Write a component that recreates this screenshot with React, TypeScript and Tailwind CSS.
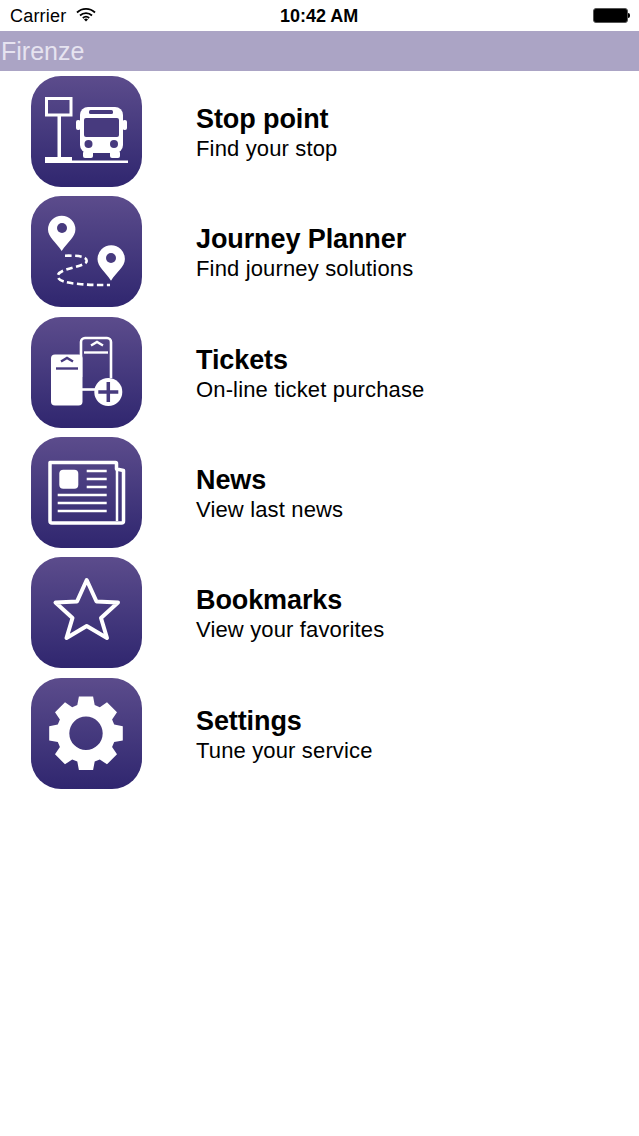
const sans = { fontFamily: '"Liberation Sans", Arial, sans-serif' }

function gearPath() {
  const cx = 55
  const cy = 55.3
  const pts: string[] = []
  for (let i = 0; i < 8; i++) {
    const a = (i * Math.PI) / 4 - Math.PI / 2
    const corners: [number, number][] = [
      [29.5, -0.3],
      [37.5, -0.19],
      [37.5, 0.19],
      [29.5, 0.3],
    ]
    corners.forEach(([r, d]) => {
      pts.push(`${(cx + r * Math.cos(a + d)).toFixed(1)} ${(cy + r * Math.sin(a + d)).toFixed(1)}`)
    })
  }
  return `M${pts.join('L')}Z M${cx - 16.7} ${cy}a16.7 16.7 0 1 0 33.4 0a16.7 16.7 0 1 0 -33.4 0Z`
}

const DARK = '#473a7e'

const icons = {
  stop: (
    <>
      <rect x="15.500" y="22.500" width="24.500" height="16.500" fill="none" stroke="#fff" strokeWidth="3" />
      <rect x="26.500" y="39" width="3.500" height="44" fill="#fff" />
      <rect x="14" y="81" width="27" height="6" fill="#fff" />
      <rect x="41" y="84.500" width="56" height="2.500" fill="#fff" />
      <rect x="49" y="31" width="43" height="46" rx="8" fill="#fff" />
      <rect x="45" y="44" width="4.500" height="10" rx="2" fill="#fff" />
      <rect x="91.500" y="44" width="4.500" height="10" rx="2" fill="#fff" />
      <rect x="52" y="75" width="10" height="7" rx="2" fill="#fff" />
      <rect x="79" y="75" width="10" height="7" rx="2" fill="#fff" />
      <rect x="58" y="34" width="24" height="4" rx="1.500" fill={DARK} />
      <rect x="53" y="42" width="35" height="19" rx="2" fill={DARK} />
      <circle cx="57.500" cy="68" r="4" fill={DARK} />
      <circle cx="83" cy="68" r="4" fill={DARK} />
    </>
  ),
  journey: (
    <>
      <path d="M30.700 55C25 46 17 41 17 33.500a13.700 13.700 0 0 1 27.400 0C44.400 41 36.500 46 30.700 55Z" fill="#fff" />
      <circle cx="31" cy="32" r="5" fill={DARK} />
      <path d="M80 84.700C74.500 76 66.500 71 66.500 63a13.700 13.700 0 0 1 27.400 0C93.900 71 85.500 76 80 84.700Z" fill="#fff" />
      <circle cx="80" cy="62" r="5" fill={DARK} />
      <path
        d="M34 59.700C46 59.500 56 60 55.700 65C55.500 71 27 72 26.700 80C26.500 85 36 87 48 88C58 89 68 89 79 89"
        fill="none"
        stroke="#fff"
        strokeWidth="2.600"
        strokeDasharray="6.500 3.500"
      />
    </>
  ),
  tickets: (
    <>
      <path d="M50 60V25a4 4 0 0 1 4-4h22a4 4 0 0 1 4 4v36" fill="none" stroke="#fff" strokeWidth="2.600" />
      <path d="M51 72.500h15" stroke="#fff" strokeWidth="2.600" />
      <rect x="20" y="37.500" width="31.500" height="51" rx="4" fill="#fff" />
      <path d="M30 44.500l6-3.500 6 3.500" fill="none" stroke={DARK} strokeWidth="2.400" />
      <path d="M25 51.500h22" stroke={DARK} strokeWidth="2.400" />
      <path d="M60 28.500l6-3.500 6 3.500" fill="none" stroke="#fff" strokeWidth="2.400" />
      <path d="M53 35.500h24" stroke="#fff" strokeWidth="2.400" />
      <circle cx="77.300" cy="75" r="14" fill="#fff" />
      <path d="M77.300 65v20M67.300 75h20" stroke={DARK} strokeWidth="3.500" />
    </>
  ),
  news: (
    <>
      <path d="M19 25.500h65.500a1 1 0 0 1 1 1V32l7 1.500V84a2 2 0 0 1-2 2H21a2 2 0 0 1-2-2Z" fill="none" stroke="#fff" strokeWidth="3.500" strokeLinejoin="round" />
      <path d="M86 32v52" stroke="#fff" strokeWidth="2.500" />
      <rect x="28.300" y="32.700" width="19" height="19" rx="4" fill="#fff" />
      <path d="M55.700 34h20M55.700 42h20M55.700 50h20M26.700 58h49M26.700 66h49M26.700 74h49" stroke="#fff" strokeWidth="2.600" />
    </>
  ),
  bookmarks: (
    <path
      d="M55.700 23L65.500 44.500L87 45.500L70 61L76 81L55.700 69L35.500 81L41.500 61L24.500 45.500L46 44.500Z"
      fill="none"
      stroke="#fff"
      strokeWidth="4"
      strokeLinejoin="round"
    />
  ),
  settings: <path d={gearPath()} fill="#fff" fillRule="evenodd" />,
}

const items = [
  { icon: icons.stop, title: 'Stop point', sub: 'Find your stop' },
  { icon: icons.journey, title: 'Journey Planner', sub: 'Find journey solutions' },
  { icon: icons.tickets, title: 'Tickets', sub: 'On-line ticket purchase' },
  { icon: icons.news, title: 'News', sub: 'View last news' },
  { icon: icons.bookmarks, title: 'Bookmarks', sub: 'View your favorites' },
  { icon: icons.settings, title: 'Settings', sub: 'Tune your service' },
]

export default function App() {
  return (
    <div className="min-h-[1136px] bg-white text-black" style={sans}>
      {/* Status bar */}
      <div className="relative flex h-[31px] items-center justify-between pl-[10px] pr-[9px]">
        <div className="flex items-center gap-[10px]">
          <span className="text-[18px] leading-none tracking-[0.2px]">Carrier</span>
          <svg width="20" height="15" viewBox="0 0 20 15" className="-translate-y-px">
            <path d="M1 5.500a13 13 0 0 1 18 0M4 8.500a9 9 0 0 1 12 0M6.800 11a5 5 0 0 1 6.400 0" fill="none" stroke="#000" strokeWidth="1.800" />
            <path d="M8 12.500a3 3 0 0 1 4 0L10 14.500Z" fill="#000" />
          </svg>
        </div>
        <span className="absolute left-[280px] top-[7px] text-[18px] font-bold leading-none">10:42 AM</span>
        <div className="flex items-center">
          <div className="h-[15px] w-[35px] rounded-[3px] border border-[#555] bg-black" />
          <div className="h-[5px] w-[2px] rounded-r-sm bg-black" />
        </div>
      </div>

      {/* Title bar */}
      <div className="flex h-[40px] items-center bg-[#aba4c5] pl-px">
        <span className="text-[25px] leading-none text-[#e6e3f0]">Firenze</span>
      </div>

      {/* Menu */}
      <div className="pt-[5px]">
        {items.map((item) => (
          <div key={item.title} className="mb-[9.35px] flex items-center pl-[31px]">
            <div className="h-[111px] w-[111px] shrink-0 rounded-[30px] bg-gradient-to-b from-[#5c4c8c] to-[#30266f]">
              <svg width="111" height="111" viewBox="0 0 111 111">
                {item.icon}
              </svg>
            </div>
            <div className="ml-[54px] pt-[2px]">
              <div className="text-[27px] font-bold leading-[31px] tracking-[-0.1px]">{item.title}</div>
              <div className="mt-px text-[22px] leading-[25px] tracking-[0.15px]">{item.sub}</div>
            </div>
          </div>
        ))}
      </div>
    </div>
  )
}
